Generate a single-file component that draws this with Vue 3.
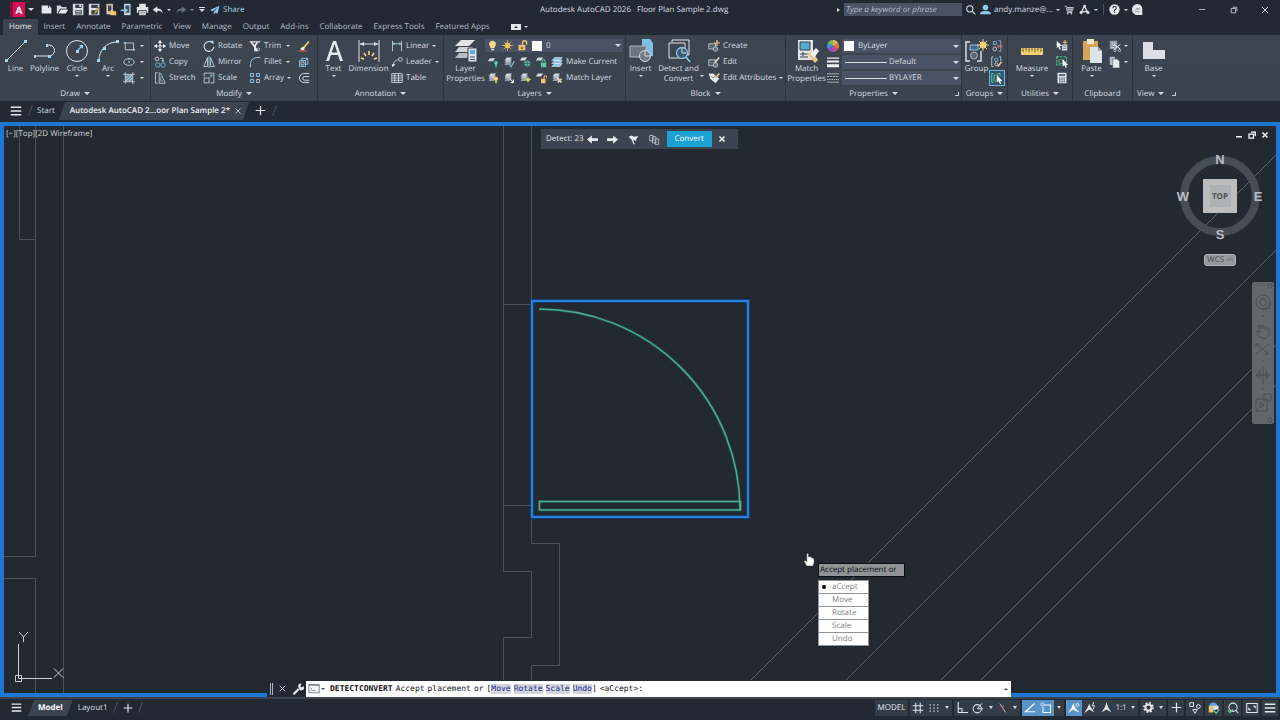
<script setup>
import { h, ref } from 'vue'

const W = 'stroke="#dfe4ea" fill="none"'
const B = 'stroke="#8fc4ea" fill="none"'
const sheet = (x, y, c = '#d5dadf') => `<path d="M${x + 3} ${y}h7l-3 4h-7z" fill="${c}"/>`
const stack = sheet(2, 2) + sheet(2, 5, '#b9c0c8') + sheet(2, 8, '#98a1ac')

const icons = {
  newfile: '<path d="M2 3h8v3h4v7H2z" fill="#e4e7ea"/><path d="M11 3l3 3h-3z" fill="#e4e7ea"/>',
  open: '<path d="M1 3h5l1 2h6v2H5l-3 6H1z" fill="#cfd4da"/><path d="M6 8h9l-3 5H3z" fill="#e8ebee"/>',
  save: '<path d="M1 1h13v14H1z" fill="#d9dde1"/><path d="M4 2h8v4H4zM4 9h8v5H4z" fill="#39424e"/><path d="M5 10h6v1H5zM5 12h6v1H5zM9 2h2v3H9z" fill="#e4e7ea"/>',
  saveas: '<path d="M1 1h13v14H1z" fill="#d9dde1"/><path d="M4 2h8v4H4zM4 9h8v5H4z" fill="#39424e"/><path d="M15 6l-6 7-2 1 1-3 5-6z" fill="#e9b85c" stroke="#39424e" stroke-width=".6"/>',
  webopen: '<path d="M3 1h8v13H3z" fill="#cfc7b4"/><path d="M5 3h4v7H5z" fill="#39424e"/><path d="M8 9h3l1 1h3v5H8z" fill="#f0c96a"/>',
  mobile: '<path d="M5 1h8v14H5z" fill="#c9d3dc"/><path d="M6.500 3h5v9h-5z" fill="#39556d"/><path d="M1 8h5V6l4 3-4 3v-2H1z" fill="#8fc4ea"/>',
  print: '<path d="M4 1h8v4H4zM1 5h14v7h-2V9H3v3H1z" fill="#e4e7ea"/><path d="M4 10h8v5H4z" fill="#f4f5f6"/><path d="M5 11.500h6M5 13.500h6" stroke="#59626d" stroke-width=".8"/>',
  undo: '<path d="M7 3L1 7.500 7 12V9c4-.5 6 .5 7 4 .5-4-2-7-7-7z" fill="#dfe4ea"/>',
  redo: '<path d="M9 3l6 4.500L9 12V9c-4-.5-6 .5-7 4-.5-4 2-7 7-7z" fill="#66707c"/>',
  plane: '<path d="M15 1L0 8l4 2 8-6-6 7v4l3-3 3 2z" fill="#8ecbf0"/>',
  search: `<g ${W} stroke-width="1.500"><circle cx="7" cy="7" r="4.500"/><path d="M10.500 10.500L15 15"/></g>`,
  user: '<circle cx="8" cy="5" r="4" fill="#8ecbf0"/><path d="M0 15c0-4 3-5 8-5s8 1 8 5z" fill="#8ecbf0"/>',
  cart: '<path d="M1 2h3l1 2h10l-2 6H5L3.500 4M5 12h8" stroke="#dfe4ea" fill="none" stroke-width="1.300"/><path d="M5 5h9l-1 4H6z" fill="#9ba4ae"/><circle cx="6" cy="14" r="1.300" fill="#dfe4ea"/><circle cx="12" cy="14" r="1.300" fill="#dfe4ea"/>',
  autodesk: `<path d="M8 3L3 13M8 3l5 10M4 11h8" ${W} stroke-width="2"/><circle cx="8" cy="3" r="2" fill="#dfe4ea"/><circle cx="3" cy="12.500" r="2.200" fill="#dfe4ea"/><circle cx="13" cy="12.500" r="2.200" fill="#dfe4ea"/>`,
  help: '<circle cx="8" cy="8" r="7.500" fill="#e4e7ea"/><path d="M5.500 6c0-3.500 5-3.500 5 0 0 2-2.500 1.800-2.500 4M8 11v1.800" stroke="#222933" stroke-width="1.500" fill="none"/>',
  chat: '<path d="M8 0a8 8 0 1 0 0 16h7V8a8 8 0 0 0-7-8z" fill="#e4e7ea"/><path d="M4 10l3-4 1 3 4-3M5 11h7M7 7h4" stroke="#7d8792" fill="none"/>',
  min: `<path d="M3 8h9" ${W}/>`,
  restore: `<path d="M3.500 5.500h7v7h-7zM6 3.500h6.500V10" ${W} stroke-width="1.200"/>`,
  close: `<path d="M3 3l10 10M13 3L3 13" ${W} stroke-width="1.500"/>`,
  closeBold: `<path d="M3 3l10 10M13 3L3 13" stroke="#fff" stroke-width="3"/>`,
  minBold: '<path d="M2 10h12v3H2z" fill="#fff"/>',
  restoreBold: '<path d="M2 6h9v8H2zM6 2h8.500v8" stroke="#fff" stroke-width="2.500" fill="none"/>',
  menu: '<path d="M1 3h14M1 8h14M1 13h14" stroke="#e4e7ea" stroke-width="2"/>',
  plus: '<path d="M8 1v14M1 8h14" stroke="#e4e7ea" stroke-width="1.800"/>',

  line: `<path d="M3 21L21 3" ${W}/><path d="M1 20h3v3H1zM20 1h3v3h-3z" fill="#a8d4f2"/>`,
  polyline: `<path d="M2 17h14a5 5 0 0 0 0-11h-2" ${W}/><path d="M1 16h2v3H1zM13 5h2v3h-2zM15 16h3v3h-3z" fill="#a8d4f2"/>`,
  circle: `<circle cx="12" cy="12" r="10.500" ${W}/><path d="M12 12l5-5" ${B} stroke-width="1.200"/><path d="M11 11h3v3h-3zM14 6h4v4z" fill="#a8d4f2"/>`,
  arc: `<path d="M3 21C3 12 10 3 21 3" ${W}/><path d="M1 20h3v3H1zM7 8h3v3H7zM20 1h3v3h-3z" fill="#a8d4f2"/>`,
  rect: `<path d="M3 4h11v9H3z" ${W}/><path d="M1 3h3v2H1zM13 12h3v2h-3z" fill="#a8d4f2"/>`,
  ellipse: `<ellipse cx="8" cy="8" rx="7" ry="4.500" ${W}/><path d="M7 7h2v2H7zM7 2.500h2v2H7z" fill="#a8d4f2"/>`,
  hatch: `<path d="M3 3h10v10H3z" fill="#7590a9"/><path d="M3 0v16M13 0v16M0 3h16M0 13h16M4 12l8-8M4 8l4-4M8 12l4-4" ${W} stroke-width=".9"/>`,

  move: `<path d="M8 1v14M1 8h14" ${W} stroke-width="1.600"/><path d="M8 0l3 4H5zM8 16l3-4H5zM0 8l4-3v6zM16 8l-4-3v6z" fill="#f0f2f4"/>`,
  copy: `<circle cx="4" cy="4" r="2.500" ${W}/><path d="M8 3h4v4M10.500 5.500L12 7.500l1.500-2" ${W}/><circle cx="5" cy="12" r="3" ${B}/><circle cx="12" cy="12" r="3" ${B}/>`,
  stretch: `<path d="M2 1v14h3M2 1h3M7 1v14h8L9 2z" ${W}/><path d="M9 6v6h3" ${B}/>`,
  rotate: `<path d="M12 3.500A6.500 6.500 0 1 0 14.500 9" ${W} stroke-width="1.400"/><path d="M9 1h5v5z" fill="#a8d4f2"/>`,
  mirror: `<path d="M6 2v12H1zM10 2v12h5z" ${W}/><path d="M8 0v16" ${B} stroke-width="1.200"/>`,
  scale: `<path d="M1.500 8v6.500H8V8zM1.500 6V1.500h13v13H10" ${W}/><path d="M8 8l4-4M9 4h3v3" ${B}/>`,
  trim: `<path d="M1 2.500h14" stroke="#f0f2f4" stroke-width="1.500"/><path d="M3 3l4 5 4 7M11 3L8 8v7" stroke="#f0f2f4" stroke-width="2.200" fill="none"/><circle cx="12.500" cy="12.500" r="1.800" ${W}/>`,
  fillet: `<path d="M2 15V10" ${W}/><path d="M2 10Q3 3 10 2" ${B} stroke-width="1.300"/><path d="M10 2h5" ${W}/>`,
  array: `<path d="M2 2h4v4H2zM10 2h4v4h-4zM2 10h4v4H2z" ${B} stroke-width="1.300"/><path d="M10 10h4v4h-4z" ${W}/>`,
  erase: '<path d="M14 1l-8 9 2 2 7-9z" fill="#f0c76c"/><path d="M6 9l3 3-3 2-3-2z" fill="#fff"/><path d="M1 14.500h10" stroke="#e2604f" stroke-width="1.500"/>',
  explode: `<path d="M2 6h8v8H2zM5 6V3h8v8h-3M10 6l3-3" ${B} stroke-width="1.200"/><path d="M4 8h4v4H4z" ${W}/>`,
  offset: `<path d="M15 2H8a5.500 5.500 0 0 0 0 12h7M15 6H9a2 2 0 0 0 0 5h6" ${W} stroke-width="1.200"/>`,

  text: '<path d="M4 22L11 2h3l7 20h-3l-2-6H9l-2 6zM9.700 13.500h5.600L12.500 5z" fill="#e6e9ec"/>',
  dimension: `<path d="M2 1v22M22 1v22M3 5h18" ${W}/><path d="M3 5l4-2v4zM21 5l-4-2v4z" fill="#dfe4ea"/><path d="M12 12v4M7 14l2 3M17 14l-2 3M4 19l3 1M20 19l-3 1" stroke="#f3da8b" stroke-width="1.600"/>`,
  linear: `<path d="M2 1v14M14 1v14M2 5h12" ${W}/><path d="M2 5l3-2v4zM14 5l-3-2v4z" fill="#8fc4ea"/>`,
  leader: `<path d="M3 12Q4 5 10 5" ${W}/><circle cx="12.500" cy="4.500" r="2.500" ${W}/><path d="M1 11h5l-4 4z" fill="#dfe4ea"/>`,
  table: `<path d="M1 2h14v12H1zM1 5h14M1 8h14M1 11h14M5 2v12M10 2v12" ${W}/>`,

  layerprops: '<path d="M7 1h14l-6 6H1z" fill="#e1e5e8"/><path d="M5 8h14l-5 5H1z" fill="#cfd4d9"/><path d="M5 14h12l-4 5H1z" fill="#b6bdc5"/><path d="M14 9h9v14h-9z" fill="#dfe3e8" stroke="#39424e"/><path d="M16 11h5v4h-5z" fill="#5aabe0"/><path d="M16 18h5M16 20.500h5" stroke="#46505c"/>',
  bulb: '<path d="M8 1a5 5 0 0 0-3 9v2h6v-2a5 5 0 0 0-3-9z" fill="#f7d98b"/><path d="M6 13h4v2H6z" fill="#dfe4ea"/>',
  sun: '<circle cx="8" cy="8" r="4" fill="#f2c55e"/><path d="M8 0v16M0 8h16M2.500 2.500l11 11M13.500 2.500l-11 11" stroke="#f2c55e" stroke-width="1.100"/>',
  unlock: '<path d="M2 7h10v8H2z" fill="#f0c06a"/><path d="M8 7V4a3 3 0 0 1 6 0v3" stroke="#f0c06a" stroke-width="2" fill="none"/><path d="M6 10h2v3H6z" fill="#4a3c20"/>',
  layOff: sheet(1, 3) + '<circle cx="12" cy="9" r="2.500" fill="#5fc3b4"/><path d="M11 11h2v4h-2z" fill="#5fc3b4"/>',
  layIso: stack + '<path d="M15 7l-4 7-2-2" stroke="#8fc4ea" fill="none" stroke-width="1.500"/>',
  layFreeze: sheet(1, 2) + '<circle cx="11" cy="10" r="4" fill="#57b49c"/><path d="M11 6v8M7 10h8" stroke="#2b5b57"/>',
  layLock: sheet(1, 2) + '<path d="M8 9h7v6H8z" fill="#62c6a0"/><path d="M9.500 9V7a2 2 0 0 1 4 0v2" stroke="#62c6a0" fill="none" stroke-width="1.400"/>',
  layCur: '<path d="M5 2h10l-3 4H1zM5 6h10l-3 4H1zM5 10h10l-3 4H1z" fill="#8fc4ea" stroke="#dfe7ee" stroke-width=".8"/>',
  layOn: stack + '<circle cx="12" cy="9" r="2.800" fill="#f7d98b"/><path d="M11 11h2v4h-2z" fill="#f7d98b"/>',
  layUniso: stack + '<path d="M9 9l5 5M14 10v4h-4" stroke="#f0f2f4" fill="none" stroke-width="1.400"/>',
  layThaw: stack + '<circle cx="12" cy="10" r="2.500" fill="#e5dc7a"/><path d="M12 6v8M8 10h8" stroke="#b8cf7a"/>',
  layUnlock: sheet(1, 2) + '<path d="M8 9h6v6H8z" fill="#f0c878"/><path d="M12 9V7a2 2 0 0 1 4 0v2" stroke="#f0c878" fill="none" stroke-width="1.400"/>',
  layMatch: stack + '<path d="M8 8l6 6M14 9l-5 5" stroke="#f0e4c0" stroke-width="2"/>',

  insert: '<path d="M13 0h8l3 4v13H13z" fill="#7fc0ea"/><path d="M1 7h16v11H1z" fill="#6c7580" stroke="#aeb6bf"/><circle cx="16" cy="17" r="5.500" fill="#717b87" stroke="#d5dae0"/><path d="M16 12v5h5" stroke="#d5dae0" fill="none"/>',
  detect: `<path d="M5 3V1h17v15h-3M2 4h16v15H2z" ${W}/><circle cx="15" cy="14" r="5.500" fill="#3e5a72" stroke="#8fc4ea" stroke-width="1.300"/><path d="M19 18l4 5" ${B} stroke-width="1.800"/><path d="M15 9v5h4" ${W}/>`,
  create: `<path d="M1 5h9v7H1z" fill="#59626d" stroke="#cfd4da"/><circle cx="10" cy="12" r="3" fill="#68727e" stroke="#cfd4da"/><path d="M12 0v8M8 4h8" stroke="#f0cb7d" stroke-width="1.600"/>`,
  edit: `<path d="M1 5h9v8H1z" fill="#59626d" stroke="#cfd4da"/><circle cx="10" cy="12" r="3" fill="#68727e" stroke="#cfd4da"/><path d="M15 2l-6 7" stroke="#e6dfd0" stroke-width="2"/>`,
  attr: '<path d="M1 2h6l8 7-5 6-7-6z" fill="#e8ebee"/><path d="M4 5l3 3 3-3" stroke="#46505c" fill="none"/><path d="M15 2l-5 6" stroke="#f0c878" stroke-width="2.200"/>',
  match: '<path d="M3 1h15v20H3z" fill="#e1e5e9"/><path d="M5 3h10v8H5z" fill="#5aa9cf" stroke="#38444f"/><path d="M5 15h9M8 13v4M5 18h8" stroke="#39424e" stroke-width="1.200"/><path d="M12 15l5-3 6 9-3 3z" fill="#e9c987"/><path d="M15 15l6-6 3 3-5 7z" fill="#f0f2f4"/>',
  wheel: '<path d="M8 8V0a8 8 0 0 1 7 4z" fill="#e8b64c"/><path d="M8 8l7-4a8 8 0 0 1 0 8z" fill="#e2793f"/><path d="M8 8l7 4a8 8 0 0 1-7 4z" fill="#d8447c"/><path d="M8 8v8a8 8 0 0 1-7-4z" fill="#7a54c8"/><path d="M8 8l-7 4a8 8 0 0 1 0-8z" fill="#3f8fdc"/><path d="M8 8L1 4a8 8 0 0 1 7-4z" fill="#6cbf6a"/>',
  weight: '<path d="M0 2h16v1.500H0zM0 6h16v2.500H0zM0 11h16v4H0z" fill="#f0f2f4"/>',
  ltype: '<path d="M0 2.500h16M0 13.500h16" stroke="#cfd4da"/><path d="M0 6h16" stroke="#cfd4da" stroke-dasharray="3 1"/><path d="M0 10h16" stroke="#cfd4da" stroke-dasharray="2 1"/>',

  group: `<path d="M5 3H1v19h4M16 12v10h-4" ${W} stroke-width="1.400"/><path d="M5 6h8v5H5z" fill="#40668a" stroke="#8fc4ea"/><circle cx="9" cy="16.500" r="3.500" fill="#5c6671" stroke="#aeb6bf"/><circle cx="18" cy="6" r="3.500" fill="#f5ce7a"/><path d="M18 0v12M12 6h12M14 2l8 8M22 2l-8 8" stroke="#f5ce7a"/>`,
  ungroup: `<path d="M3 2h4v4H3zM10 1h3v14h-3" ${B}/><circle cx="5" cy="12" r="2.500" ${W}/><path d="M8 7l7 3M8 10l7-3" stroke="#e36a80" stroke-width="1.300"/>`,
  groupedit: `<path d="M3 1H1v13h2M11 1h2v6" ${W}/><path d="M5 3h4v4H5z" ${B}/><circle cx="7" cy="11" r="2" ${W}/><path d="M14 8l-5 6" stroke="#f0c6b0" stroke-width="2"/>`,
  groupsel: '<path d="M3 2H1v12h2M9 2h3v3" stroke="#64c8a0" fill="none" stroke-width="1.300"/><path d="M4 4h4v8H4z" stroke="#64c8a0" fill="none"/><path d="M8 4v10l2-2 2 4 1.500-1-1.500-3h3z" fill="#fff"/>',
  measure: '<path d="M1 9h22v7H1z" fill="#f0cf73"/><path d="M3 9v4M6 9v3M9 9v4M12 9v3M15 9v4M18 9v3M21 9v4" stroke="#705c28"/>',
  qselect: '<path d="M1 1v10l2-2 2 4 1.500-1L5 8h3z" fill="#fff"/><path d="M8 6h7v8H8z" fill="#dfe4ea"/><path d="M9 8h5M9 11h5" stroke="#46505c"/><path d="M12 0v6M9 3h6" stroke="#f0c878" stroke-width="1.300"/>',
  qselall: '<path d="M1 1h13v11H1z" fill="none" stroke="#56cf95" stroke-width="1.400" stroke-dasharray="3 1.500"/><path d="M4 5h5v5H4z" fill="none" stroke="#56cf95"/><path d="M9 4v10l2-2 2 4 1.500-1-1.500-3h3z" fill="#fff"/>',
  calc: '<path d="M2 1h12v14H2z" fill="#dfe4ea"/><path d="M4 3h8v2H4z" fill="#39424e"/><path d="M4 8h8M4 10.500h8M4 13h8" stroke="#39424e" stroke-width="1.300" stroke-dasharray="2 1"/>',
  paste: '<path d="M3 2h15v19H3z" fill="#d6a35d"/><path d="M7 0h7v5H7z" fill="#efe6cf"/><path d="M10 8h8l4 4v12H10z" fill="#dfe3ea"/><path d="M18 8l4 4h-4z" fill="#9ba4b2"/>',
  cut: `<path d="M1 1h10v11H1z" fill="#8e97a3"/><path d="M3 4h6M3 7h6M3 10h4" stroke="#e4e7ea"/><path d="M7 6l8 6M15 6l-8 6" stroke="#f0f2f4" stroke-width="1.300"/><circle cx="8" cy="14" r="1.500" ${W}/><circle cx="14" cy="14" r="1.500" ${W}/>`,
  clip: '<path d="M1 1h7v11H1z" fill="#b3bac3"/><path d="M5 4h6l3 3v9H5z" fill="#e8ebee" stroke="#59626d" stroke-width=".8"/>',
  base: '<path d="M1 3h10v8h12v9H1z" fill="#dcdfe6"/>',

  left: '<path d="M0 8l7-6v4h9v4H7v4z" fill="#e8ebee"/>',
  right: '<path d="M16 8L9 2v4H0v4h9v4z" fill="#e8ebee"/>',
  flag: '<path d="M1 4l4-2 4 2 6-1-2 3-2 4-4-2 3 7H8L5 8z" fill="#e8ebee"/>',
  copies: '<path d="M1 2h5v8H1zM5 4h5v9H5zM9 7h5v8H9z" fill="#3b444f" stroke="#c4cbdc" stroke-width="1.200"/>',
  wrench: '<path d="M2 15L9 8" stroke="#e4e7ea" stroke-width="3"/><path d="M8 4a4 4 0 0 1 5-3l-2 3 2 2 3-2a4 4 0 0 1-6 5z" fill="#e4e7ea"/>',
  prompt: '<path d="M1 2h14v11H1z" fill="#f6f8fa" stroke="#59626d"/><path d="M1 3h14" stroke="#7d8792" stroke-width="1.500"/><path d="M3 6l2 2-2 2M6 10h4" stroke="#59626d" fill="none"/>',

  grid: `<path d="M5 1v14M11 1v14M1 5h14M1 11h14" ${W} stroke-width="1.400"/>`,
  snap: '<path d="M1 3h14M1 8h14M1 13h14" stroke="#dfe4ea" stroke-width="2" stroke-dasharray="2 4"/>',
  ortho: `<path d="M3 0v14h13M3 9h5v5" ${W} stroke-width="1.500"/>`,
  polar: `<circle cx="7" cy="9" r="5.500" ${W} stroke-width="1.400"/><path d="M15 9H7l6-7" ${W} stroke-width="1.300"/>`,
  iso: `<path d="M3 1l9 14" ${W} stroke-width="1.300"/><path d="M8 3v9" stroke="#d05a5a" stroke-width="1.300"/>`,
  angle: '<path d="M14 2L2 13h13" stroke="#f4f7fa" fill="none" stroke-width="1.600"/>',
  osnap: '<path d="M5 4h9v10H4V6" stroke="#f4f7fa" fill="none" stroke-width="1.400"/><circle cx="3" cy="3" r="2" stroke="#f4f7fa" fill="none"/>',
  annoA: '<path d="M7 1l2 6 6 7-5-2-3-2-3 2-4 3 5-8z" fill="#fff"/><circle cx="12.500" cy="4" r="2" stroke="#fff" fill="none"/>',
  annoB: '<path d="M7 2l2 5 5 7-7-4-7 5 5-8z" fill="#e4e7ea"/><path d="M13 0l-2 5h3l-2 5" stroke="#e4e7ea" fill="none" stroke-width="1.300"/>',
  annoC: '<path d="M8 0l2 7 5 8-7-4-7 4 5-8z" fill="#e4e7ea"/>',
  gear: '<circle cx="8" cy="8" r="4.500" fill="none" stroke="#e4e7ea" stroke-width="3"/><circle cx="8" cy="8" r="6.800" fill="none" stroke="#e4e7ea" stroke-width="2.200" stroke-dasharray="2.700 2.640"/>',
  shapes: `<path d="M1 1h5v5H1zM8 15l-3-5h6z" ${W} stroke-width="1.300"/><circle cx="12.500" cy="6" r="2.500" ${W} stroke-width="1.300"/>`,
  perf: '<circle cx="7" cy="6" r="5.500" fill="#5b9fe0"/><path d="M1 5h6v9H1z" fill="#e6c66a"/><path d="M7 5h7v5H7z" fill="#dfe4ea"/><path d="M8 12l3 3 4-5" stroke="#6ad08b" fill="none" stroke-width="1.600"/>',
  trusted: `<circle cx="8" cy="7" r="5.500" ${W} stroke-width="1.400"/><path d="M12 11l3 4" ${W} stroke-width="1.400"/><path d="M1 11l3 3 4-4" stroke="#5fc88c" fill="none" stroke-width="1.800"/>`,
  clean: `<path d="M1 2h14v12H1z" ${W} stroke-width="1.400"/><path d="M3 11V7l4 4zM13 5v4L9 5z" fill="#e4e7ea"/>`,
}

const Icon = (props) => {
  const size = props.size || (props.big ? 24 : 12)
  return h('svg', {
    viewBox: props.big ? '0 0 24 24' : '0 0 16 16',
    width: size,
    height: size,
    'aria-hidden': 'true',
    innerHTML: icons[props.name],
  })
}
Icon.props = { name: String, size: String, big: Boolean }

const quick = ['newfile', 'open', 'save', 'saveas', 'webopen', 'mobile', 'print']
const menuTabs = ['Home', 'Insert', 'Annotate', 'Parametric', 'View', 'Manage', 'Output', 'Add-ins', 'Collaborate', 'Express Tools', 'Featured Apps']
const activeTab = ref('Home')

const drawBig = [
  { icon: 'line', label: 'Line', cls: 'w-line' },
  { icon: 'polyline', label: 'Polyline', cls: 'w-poly' },
  { icon: 'circle', label: 'Circle', cls: 'w-circle', drop: true },
  { icon: 'arc', label: 'Arc', cls: 'w-arc', drop: true },
]
const modify = [
  ['move', 'Move'], ['rotate', 'Rotate'], ['trim', 'Trim', true], ['erase', ''],
  ['copy', 'Copy'], ['mirror', 'Mirror'], ['fillet', 'Fillet', true], ['explode', ''],
  ['stretch', 'Stretch'], ['scale', 'Scale'], ['array', 'Array', true], ['offset', ''],
]
const layerRows = [
  { icons: ['layOff', 'layIso', 'layFreeze', 'layLock'], icon: 'layCur', label: 'Make Current' },
  { icons: ['layOn', 'layUniso', 'layThaw', 'layUnlock'], icon: 'layMatch', label: 'Match Layer' },
]
const keywords = ['Move', 'Rotate', 'Scale', 'Undo']
const options = ['aCcept', 'Move', 'Rotate', 'Scale', 'Undo']
const chosen = ref('aCcept')
const command = ref('')
const query = ref('')
</script>

<template>
  <div class="app">
    <header class="titlebar">
      <div class="tb-left">
        <button class="logo" aria-label="Application menu">A</button>
        <i class="caret"></i>
        <div class="quick">
          <button v-for="q in quick" :key="q" class="ib" :aria-label="q"><Icon :name="q" size="13" /></button>
        </div>
        <button class="ib" aria-label="Undo"><Icon name="undo" /></button><i class="caret sm"></i>
        <button class="ib redo" aria-label="Redo"><Icon name="redo" /></button><i class="caret sm dim"></i>
        <button class="more" aria-label="Customize toolbar"></button>
        <button class="share"><Icon name="plane" size="10" />Share</button>
      </div>
      <h1 class="title"><span>Autodesk AutoCAD 2026</span><span>Floor Plan Sample 2.dwg</span></h1>
      <div class="tb-right">
        <i class="play"></i>
        <input v-model="query" class="search" type="search" placeholder="Type a keyword or phrase" aria-label="Search" />
        <button class="ib" aria-label="Search"><Icon name="search" size="11" /></button>
        <button class="user"><Icon name="user" size="11" /><span>andy.manze@...</span><i class="caret sm"></i></button>
        <button class="ib" aria-label="Store"><Icon name="cart" size="10" /></button>
        <button class="ib" aria-label="Autodesk apps"><Icon name="autodesk" size="11" /></button><i class="caret sm"></i>
        <span class="vsep"></span>
        <button class="ib" aria-label="Help"><Icon name="help" size="11" /></button><i class="caret sm"></i>
        <button class="ib" aria-label="Assistant"><Icon name="chat" size="11" /></button>
        <div class="winbtns">
          <button aria-label="Minimize"><Icon name="min" size="11" /></button>
          <button aria-label="Restore"><Icon name="restore" size="10" /></button>
          <button aria-label="Close"><Icon name="close" size="10" /></button>
        </div>
      </div>
    </header>

    <nav class="tabs">
      <button v-for="t in menuTabs" :key="t" :class="{ on: t === activeTab }" @click="activeTab = t">{{ t }}</button>
      <button class="ribbon-toggle" aria-label="Minimize ribbon"><span><i></i></span><i class="caret sm"></i></button>
    </nav>

    <section class="ribbon">
      <div class="panel">
        <div class="body draw">
          <button v-for="d in drawBig" :key="d.label" class="big" :class="d.cls">
            <Icon :name="d.icon" big /><span>{{ d.label }}</span><i v-if="d.drop" class="caret sm"></i>
          </button>
          <div class="col">
            <button v-for="s in ['rect', 'ellipse', 'hatch']" :key="s" class="small" :aria-label="s"><Icon :name="s" /><i class="caret sm"></i></button>
          </div>
        </div>
        <h2>Draw<i class="caret"></i></h2>
      </div>

      <div class="panel">
        <div class="body modify">
          <button v-for="m in modify" :key="m[0]" class="small" :aria-label="m[1] || m[0]">
            <Icon :name="m[0]" /><span v-if="m[1]">{{ m[1] }}</span><i v-if="m[2]" class="caret sm end"></i>
          </button>
        </div>
        <h2>Modify<i class="caret"></i></h2>
      </div>

      <div class="panel">
        <div class="body">
          <button class="big w-text"><Icon name="text" big /><span>Text</span><i class="caret sm"></i></button>
          <button class="big w-dim"><Icon name="dimension" big /><span>Dimension</span></button>
          <div class="col grow">
            <button class="small"><Icon name="linear" /><span>Linear</span><i class="caret sm end"></i></button>
            <button class="small"><Icon name="leader" /><span>Leader</span><i class="caret sm end"></i></button>
            <button class="small"><Icon name="table" /><span>Table</span></button>
          </div>
        </div>
        <h2>Annotation<i class="caret"></i></h2>
      </div>

      <div class="panel">
        <div class="body">
          <button class="big w-layer"><Icon name="layerprops" big /><span>Layer<br />Properties</span></button>
          <div class="col grow">
            <div class="combo">
              <Icon name="bulb" size="11" /><Icon name="sun" size="11" /><Icon name="unlock" size="11" /><b class="chip"></b>
              <select aria-label="Layer"><option>0</option></select>
              <i class="caret"></i>
            </div>
            <div v-for="r in layerRows" :key="r.label" class="row">
              <button v-for="i in r.icons" :key="i" class="ib" :aria-label="i"><Icon :name="i" /></button>
              <button class="small"><Icon :name="r.icon" /><span>{{ r.label }}</span></button>
            </div>
          </div>
        </div>
        <h2>Layers<i class="caret"></i></h2>
      </div>

      <div class="panel">
        <div class="body">
          <button class="big w-insert"><Icon name="insert" big /><span>Insert</span><i class="caret sm"></i></button>
          <button class="big w-detect"><Icon name="detect" big /><span>Detect and<br />Convert</span></button>
          <i class="caret sm side"></i>
          <div class="col grow">
            <button class="small"><Icon name="create" /><span>Create</span></button>
            <button class="small"><Icon name="edit" /><span>Edit</span></button>
            <button class="small"><Icon name="attr" /><span>Edit Attributes</span><i class="caret sm end"></i></button>
          </div>
        </div>
        <h2>Block<i class="caret"></i></h2>
      </div>

      <div class="panel">
        <div class="body">
          <button class="big w-match"><Icon name="match" big /><span>Match<br />Properties</span></button>
          <div class="col grow">
            <label class="prop"><Icon name="wheel" /><span class="combo"><b class="chip"></b><select aria-label="Object color"><option>ByLayer</option></select><i class="caret"></i></span></label>
            <label class="prop"><Icon name="weight" /><span class="combo"><b class="rule"></b><select aria-label="Lineweight"><option>Default</option></select><i class="caret"></i></span></label>
            <label class="prop"><Icon name="ltype" /><span class="combo"><b class="rule"></b><select aria-label="Linetype"><option>BYLAYER</option></select><i class="caret"></i></span></label>
          </div>
        </div>
        <h2>Properties<i class="caret"></i><i class="launch"></i></h2>
      </div>

      <div class="panel">
        <div class="body">
          <button class="big w-group"><Icon name="group" big /><span>Group</span></button>
          <div class="col">
            <button class="ib" aria-label="Ungroup"><Icon name="ungroup" /></button>
            <button class="ib" aria-label="Group edit"><Icon name="groupedit" /></button>
            <button class="ib picked" aria-label="Group selection"><Icon name="groupsel" /></button>
          </div>
        </div>
        <h2>Groups<i class="caret"></i></h2>
      </div>

      <div class="panel">
        <div class="body">
          <button class="big w-measure"><Icon name="measure" big /><span>Measure</span><i class="caret sm"></i></button>
          <div class="col">
            <button v-for="u in ['qselect', 'qselall', 'calc']" :key="u" class="ib" :aria-label="u"><Icon :name="u" /></button>
          </div>
        </div>
        <h2>Utilities<i class="caret"></i></h2>
      </div>

      <div class="panel">
        <div class="body">
          <button class="big w-paste"><Icon name="paste" big /><span>Paste</span><i class="caret sm"></i></button>
          <div class="col">
            <button class="small" aria-label="Cut"><Icon name="cut" /><i class="caret sm"></i></button>
            <button class="small" aria-label="Copy clip"><Icon name="clip" /><i class="caret sm"></i></button>
          </div>
        </div>
        <h2>Clipboard</h2>
      </div>

      <div class="panel view">
        <div class="body">
          <button class="big w-base"><Icon name="base" big /><span>Base</span><i class="caret sm"></i></button>
        </div>
        <h2>View<i class="caret"></i><i class="launch"></i></h2>
      </div>
    </section>

    <nav class="files">
      <button class="ib" aria-label="File tab menu"><Icon name="menu" /></button>
      <i class="slash"></i>
      <button class="ftab">Start</button>
      <div class="ftab active">
        <button>Autodesk AutoCAD 2...oor Plan Sample 2*</button>
        <button class="x" aria-label="Close drawing"><Icon name="close" size="8" /></button>
      </div>
      <button class="ib" aria-label="New drawing"><Icon name="plus" size="11" /></button>
      <i class="slash"></i>
    </nav>

    <main class="viewport">
      <svg class="plan" viewBox="4 126 1272 567" preserveAspectRatio="xMinYMin slice" aria-label="Floor plan drawing">
        <g fill="none" stroke="#4b5258" stroke-width="1">
          <path d="M19.500 126V239.500H36M35.500 126V556.500H4M4 578.500H35.500V693M63.500 126V693" />
          <path d="M503.500 126V571.500H531.500V637.500H503.500V693M531.500 126V301M503.500 304.500H531.500M503.500 505.500H531.500" />
          <path d="M531.500 517V543.500H559.500V665.500H531.500V693" />
          <path stroke="#5b6268" d="M1276 155L738 693M1276 250L833 693M1276 345L928 693M1276 385L968 693" />
        </g>
        <rect x="532" y="301" width="216" height="216" fill="none" stroke="#113d73" stroke-width="4" />
        <rect x="532" y="301" width="216" height="216" fill="none" stroke="#2b80da" stroke-width="2" />
        <g fill="none" stroke="#1a6f62" stroke-width="3" opacity=".5">
          <path d="M539 309A201 201 0 0 1 740 510" /><rect x="539.500" y="501.500" width="201" height="8.500" />
        </g>
        <g fill="none" stroke="#4fa890" stroke-width="1.500">
          <path d="M539 309A201 201 0 0 1 740 510" /><rect x="539.500" y="501.500" width="201" height="8.500" />
        </g>
        <g fill="none" stroke="#c9ced3" stroke-width="1">
          <path d="M18.500 644V678.500H52M15.500 675.500h6v6h-6zM19 632l4.500 5v5M28 632l-4.500 5M54 668.500l9 9M63 668.500l-9 9" />
        </g>
      </svg>

      <p class="vlabel">[−][Top][2D Wireframe]</p>

      <div class="docbtns">
        <button aria-label="Minimize drawing"><Icon name="minBold" size="8" /></button>
        <button aria-label="Restore drawing"><Icon name="restoreBold" size="8" /></button>
        <button aria-label="Close view"><Icon name="closeBold" size="8" /></button>
      </div>

      <div class="detect">
        <span>Detect: 23</span>
        <button aria-label="Previous"><Icon name="left" size="11" /></button>
        <button aria-label="Next"><Icon name="right" size="11" /></button>
        <button aria-label="Flag"><Icon name="flag" size="11" /></button>
        <button aria-label="Similar objects"><Icon name="copies" size="11" /></button>
        <button class="convert">Convert</button>
        <button aria-label="Close toolbar"><Icon name="closeBold" size="8" /></button>
      </div>

      <div class="compass">
        <svg viewBox="0 0 92 92" width="92" height="92" aria-label="View cube">
          <circle cx="46" cy="46" r="36" fill="none" stroke="#464d55" stroke-width="8" />
          <rect x="29" y="29" width="34" height="34" fill="#babcbd" />
          <rect x="36" y="35" width="21" height="22" fill="#aeb0b1" />
          <g class="cardinal"><text x="46" y="14">N</text><text x="84" y="51">E</text><text x="46" y="89">S</text><text x="9" y="51">W</text></g>
          <text class="top" x="46" y="49">TOP</text>
        </svg>
        <button class="wcs">WCS<span>▫▫</span></button>
      </div>

      <div class="navbar">
        <svg viewBox="0 0 22 142" width="22" height="142" fill="none" stroke="#484f55" aria-label="Navigation bar">
          <circle cx="11" cy="20" r="7" /><circle cx="11" cy="20" r="3.500" /><path d="M18 20v7h-7M10 34h2" />
          <path d="M7 54c-4-5-3-6-1-5l2 2-2-7c1-2 2-1 3 3 0-5 2-5 3 0 1-4 3-3 3 1 2-3 3-1 2 3-1 6-5 7-10 3z" />
          <path d="M4 62l13 10M17 62L4 72M4 62h4M4 62v3M17 72h-4M10 79h2" />
          <path d="M11 84v18M4 93h14M8 88v10M14 88v10M4 93l3-3M4 93l3 3M18 93l-3-3M18 93l-3 3M10 107h2" />
          <path d="M4 117h11v12H4zM12 112h7v7h-7zM8 120v6l4-3z" /><circle cx="18" cy="4" r="2" /><circle cx="18" cy="138" r="2" />
        </svg>
      </div>

      <div class="cursor">
        <svg viewBox="0 0 12 16" width="11" height="15"><path d="M3 1v8L1 8l-1 1 3 5h7l1-4V6L9 5 7 4 5 4V1L4 0z" fill="#fff" stroke="#222930" stroke-width=".5" /></svg>
      </div>
      <div class="prompt">Accept placement or</div>
      <ul class="options">
        <li v-for="o in options" :key="o"><button :class="{ chosen: o === chosen }" @click="chosen = o">{{ o }}</button></li>
      </ul>

      <form class="command" @submit.prevent>
        <span class="grip"></span>
        <button type="button" aria-label="Close command line"><Icon name="close" size="9" /></button>
        <button type="button" aria-label="Customize"><Icon name="wrench" size="12" /></button>
        <div class="cmdline">
          <button type="button" class="recent" aria-label="Recent commands"><Icon name="prompt" size="12" /><i class="caret sm"></i></button>
          <b>DETECTCONVERT</b><span>Accept</span><span>placement</span><span>or</span>
          <span class="keys">[<button v-for="k in keywords" :key="k" type="button">{{ k }}</button>]</span>
          <label for="cmd">&lt;aCcept&gt;:</label>
          <input id="cmd" v-model="command" type="text" />
          <i class="up"></i>
        </div>
      </form>
    </main>

    <footer class="status">
      <button class="ib" aria-label="Layout menu"><Icon name="menu" size="11" /></button>
      <button class="layout active">Model</button>
      <button class="layout">Layout1</button>
      <i class="slash"></i>
      <button class="ib" aria-label="New layout"><Icon name="plus" size="10" /></button>
      <i class="slash"></i>
      <div class="tools">
        <button class="model">MODEL</button>
        <div class="set"><button aria-label="Grid"><Icon name="grid" /></button><button aria-label="Snap"><Icon name="snap" size="10" /></button><i class="caret"></i></div>
        <div class="set"><button aria-label="Ortho"><Icon name="ortho" /></button><button aria-label="Polar"><Icon name="polar" /></button><i class="caret"></i><button class="slim" aria-label="Isometric"><Icon name="iso" size="10" /></button><i class="caret"></i></div>
        <div class="set"><button class="lit" aria-label="Object snap tracking"><Icon name="angle" /></button><button class="lit" aria-label="Object snap"><Icon name="osnap" /></button><i class="caret"></i></div>
        <div class="set"><button class="lit" aria-label="Annotation visibility"><Icon name="annoA" /></button><button aria-label="Auto scale"><Icon name="annoB" /></button><button aria-label="Annotation scale"><Icon name="annoC" size="11" /></button><button class="ratio">1:1</button><i class="caret"></i></div>
        <div class="set"><button aria-label="Workspace"><Icon name="gear" size="11" /></button><i class="caret"></i></div>
        <div class="set"><button aria-label="Annotation monitor"><Icon name="plus" size="11" /></button></div>
        <div class="set"><button class="wide" aria-label="Isolate objects"><Icon name="shapes" /></button></div>
        <div class="set"><button class="wide" aria-label="Graphics performance"><Icon name="perf" /></button></div>
        <div class="set"><button class="wide" aria-label="Trusted"><Icon name="trusted" /></button></div>
        <div class="set"><button class="wide" aria-label="Clean screen"><Icon name="clean" /></button></div>
        <div class="set"><button aria-label="Customization"><Icon name="menu" /></button></div>
      </div>
    </footer>
  </div>
</template>

<style>
html, body { background: #222933; }
body { margin: 0; }
</style>

<style scoped>
.app {
  display: flex;
  flex-direction: column;
  min-height: 100vh;
  background: #222933;
  color: #d6dbe1;
  font-family: "Open Sans", "Noto Sans", sans-serif;
  font-size: 8px;
  line-height: 10px;
  text-rendering: geometricPrecision;
  overflow: hidden;
}
.app *, .app *::before { box-sizing: border-box; }
button, input, select {
  margin: 0;
  padding: 0;
  border: 0;
  border-radius: 0;
  background: none;
  color: inherit;
  font: inherit;
  text-rendering: inherit;
  outline: 0;
}
button { display: flex; align-items: center; justify-content: center; white-space: nowrap; }
svg { display: block; flex: none; }
h1, h2, p, ul { margin: 0; padding: 0; font: inherit; }
.ib { width: 16px; height: 16px; flex: none; }

.caret { flex: none; width: 0; height: 0; border: 3px solid transparent; border-top-color: #d6dbe1; border-bottom: 0; }
.caret.sm { border-width: 2px; border-bottom: 0; }
.caret.dim { opacity: .6; }

/* title bar */
.titlebar { display: grid; grid-template-columns: 538fr 298fr 444fr; height: 19px; align-items: center; }
.tb-left, .tb-right, .title { display: flex; align-items: center; }
.tb-left { padding-left: 10px; }
.logo { width: 15px; height: 15px; background: #d51255; border-left: 3px solid #8e0f3c; color: #fff; font-weight: 700; font-size: 10px; }
.logo + .caret { margin: 0 4px 0 3px; }
.quick { display: flex; }
.redo { margin-left: 1px; }
.tb-left .caret.sm { margin: 0 1px; }
.more { width: 6px; height: 6px; margin: 0 5px 0 4px; border-top: 1px solid #d6dbe1; }
.more::before { content: ""; border: 3px solid transparent; border-top-color: #d6dbe1; border-bottom: 0; }
.share { gap: 3px; color: #a9cfe8; }
.title { gap: 6px; padding-left: 2px; white-space: nowrap; }
.tb-right { padding-left: 2px; }
.play { border: 2px solid transparent; border-left: 3px solid #d6dbe1; border-right: 0; margin-right: 4px; margin-left: -1px; }
.search { width: 118px; height: 13px; padding: 0 2px; background: #4a5264; font-style: italic; appearance: none; }
.search::placeholder { color: #b4bbc5; opacity: 1; }
.user { gap: 3px; margin: 0 1px 0 2px; }
.tb-right .caret.sm { margin: 0 2px 0 1px; }
.user .caret.sm { margin: 0; }
.vsep { width: 1px; height: 11px; margin: 0 3px; background: #4a5360; }
.winbtns { display: flex; flex: 1; justify-content: flex-end; }
.winbtns button { width: 31px; height: 16px; }

/* ribbon tabs */
.tabs { display: flex; height: 16px; padding-left: 3px; }
.tabs button { padding: 0 5px 0 6px; color: #b4bbc4; }
.tabs button.on { background: #3b444f; color: #e6e9ec; padding: 0 6px; }
.tabs .ribbon-toggle { gap: 3px; margin-left: 10px; }
.ribbon-toggle span { display: flex; width: 10px; height: 6px; background: #e4e7ea; align-items: center; justify-content: center; }
.ribbon-toggle span i { border: 2px solid transparent; border-bottom-color: #222933; border-top: 0; }

/* ribbon */
.ribbon {
  display: grid;
  grid-template-columns: 151px 167px 126px 182px 160px 176px 46px 65px 60px 1fr;
  height: 66px;
  background: linear-gradient(#3c4550, #3a434e);
}
.panel { display: flex; flex-direction: column; min-width: 0; border-right: 1px solid #2c343e; }
.panel:last-child { border-right: 0; }
.body { display: flex; height: 51px; padding: 3px 0 0 2px; }
.panel h2 { display: flex; position: relative; align-items: center; justify-content: center; gap: 4px; height: 15px; }
.view h2 { align-self: flex-start; padding-left: 4px; }
.view .launch { position: static; margin-left: 4px; }
.launch { position: absolute; right: 2px; width: 4px; height: 4px; border-right: 1px solid #c5cbd2; border-bottom: 1px solid #c5cbd2; }
.big { flex-direction: column; justify-content: flex-start; flex: none; height: 48px; text-align: center; padding-top: 1px; }
.big span { margin-top: 1px; }
.big .caret { margin-top: 1px; }
.w-line { width: 27px; }
.w-poly { width: 31px; }
.w-circle { width: 34px; }
.w-arc { width: 28px; }
.w-text { width: 27px; }
.w-dim { width: 43px; }
.w-layer { width: 39px; }
.w-insert { width: 25px; }
.w-detect { width: 51px; }
.w-match { width: 37px; }
.w-group { width: 25px; }
.w-measure { width: 44px; }
.w-paste { width: 33px; }
.w-base { width: 37px; }
.side { align-self: center; margin-top: 28px; margin-left: -4px; }
.col { display: flex; flex-direction: column; }
.grow { flex: 1; min-width: 0; }
.small { justify-content: flex-start; height: 16px; gap: 3px; padding-left: 1px; }
.draw .small { gap: 5px; }
.modify { display: grid; grid-template-columns: 49px 46px 49px 16px; grid-auto-rows: 16px; }
.end { margin-left: auto; margin-right: 7px; }
.side + .col { padding-left: 3px; }
.row { display: flex; }
.row .small { padding-left: 2px; }
.combo { display: flex; position: relative; flex: 1; align-items: center; gap: 4px; height: 14px; min-width: 0; padding: 0 2px; background: #4a5366; }
.grow > .combo { flex: none; height: 13px; margin: 1px 2px 2px 0; }
.combo select { flex: 1; min-width: 0; height: 12px; appearance: none; padding-right: 8px; }
.combo .caret { position: absolute; right: 2px; }
.chip { width: 10px; height: 10px; background: #fff; }
.rule { width: 42px; height: 1px; margin: 0 -2px 0 1px; background: #d6dbe1; }
.prop { display: flex; align-items: center; height: 16px; gap: 3px; padding-left: 2px; }
.picked { outline: 1px solid #6fb4e0; outline-offset: -1px; background: #35566f; }

/* file tabs */
.files { display: flex; align-items: center; height: 21px; padding: 0 8px 2px; }
.slash { width: 1px; height: 11px; margin: 0 6px; background: #4a5360; transform: rotate(20deg); }
.ftab { height: 19px; }
.ftab.active { display: flex; position: relative; align-items: center; z-index: 0; margin: 0 3px 0 4px; padding: 0 5px 0 11px; color: #eef0f2; font-weight: 600; }
.ftab.active::before, .layout.active::before {
  content: "";
  position: absolute;
  inset: 1px 0 0;
  z-index: -1;
  background: #3b444f;
  clip-path: polygon(6px 0, 100% 0, calc(100% - 6px) 100%, 0 100%);
}
.x { width: 12px; height: 12px; margin-left: 2px; }

/* drawing area */
.viewport { position: relative; flex: 1; border: 4px solid #1e78d2; background: #222930; overflow: visible; }
.plan { position: absolute; inset: 0; width: 100%; height: 100%; }
.vlabel { position: absolute; left: 2px; top: 3px; color: #d0d5da; }
.docbtns { position: absolute; right: 5px; top: 4px; display: flex; }
.docbtns button { width: 13px; height: 10px; }
.detect { position: absolute; left: 537px; top: 3px; display: flex; align-items: center; height: 20px; padding: 0 5px; background: #3b444f; color: #e0e4e8; }
.detect button { width: 21px; height: 16px; }
.detect span + button { width: 18px; }
.detect .convert { width: 45px; margin: 0 0 0 2px; background: #1ba1d3; color: #fff; }
.compass { position: absolute; right: 10px; top: 24px; display: flex; flex-direction: column; align-items: center; }
.cardinal { fill: #b9bec3; font: 700 13px "Liberation Sans", sans-serif; text-anchor: middle; }
.top { fill: #4a4e52; font: 700 8px "Open Sans", sans-serif; text-anchor: middle; }
.wcs { width: 32px; height: 12px; margin-top: 12px; gap: 3px; border-radius: 3px; background: #969a9f; color: #454b52; border: 1px solid #b0b4b8; }
.navbar { position: absolute; right: 2px; top: 156px; border-radius: 2px; background: #62676c; }
.cursor { position: absolute; left: 800px; top: 427px; }
.prompt { position: absolute; left: 814px; top: 437px; padding: 1px 7px 1px 1px; border: 1px solid #0c0f12; background: #8f9397; color: #0c0f12; height: 14px; line-height: 10px; white-space: nowrap; }
.options { position: absolute; left: 814px; top: 454px; width: 51px; background: #fff; border: 1px solid #8f9397; list-style: none; }
.options li { border-bottom: 1px solid #8f9397; }
.options li:last-child { border-bottom: 0; }
.options button { width: 100%; height: 12px; justify-content: flex-start; padding-left: 13px; color: #7b7f83; position: relative; }
.options .chosen::before { content: ""; position: absolute; left: 3px; width: 4px; height: 4px; border-radius: 50%; background: #000; }

.command { position: absolute; left: 263px; right: 265px; bottom: -4px; display: flex; height: 17px; align-items: center; background: #222933; color: #111; font-family: "DejaVu Sans Mono", "Liberation Mono", monospace; }
.command > button { width: 16px; height: 16px; }
.grip { width: 3px; height: 12px; margin: 0 1px 0 3px; border: 1px solid #aab1b9; border-width: 0 1px; }
.cmdline { display: flex; flex: 1; align-items: center; height: 16px; padding: 0 3px 0 2px; background: #fff; gap: 3px; white-space: nowrap; }
.cmdline .caret { border-top-color: #444; }
.recent { gap: 1px; margin-right: 2px; }
.keys { display: flex; gap: 3px; }
.keys button { background: #d3d5da; color: #25259a; height: 10px; }
.keys button:first-child { margin-left: -3px; }
.keys button:last-child { margin-right: -3px; }
.cmdline input { flex: 1; min-width: 0; }
.cmdline .up { border: 2px solid transparent; border-bottom-color: #444; border-top: 0; }

/* status bar */
.status { display: flex; align-items: center; height: 23px; padding: 0 2px 4px 8px; border-top: 2px solid #3b444f; }
.layout { position: relative; z-index: 0; height: 17px; margin-right: 1px; padding: 0 4px; }
.layout.active { margin-left: 4px; padding: 0 10px; color: #fff; font-weight: 700; }
.status .slash { margin: 0 2px; }
.status .slash + .ib { margin: 0 2px; }
.tools { display: flex; flex: 1; justify-content: flex-end; gap: 2px; }
.set { display: flex; align-items: center; background: #333c47; }
.tools button { width: 16px; height: 16px; }
.tools button.model { width: 33px; background: #333c47; color: #e6e9ec; }
.tools button.wide { width: 17px; }
.tools button.slim { width: 14px; }
.tools button.ratio { width: 14px; }
.set .caret { margin: 0 3px; border-width: 3px 2px 0; }
.tools button.lit { background: #5a93c8; }
</style>
